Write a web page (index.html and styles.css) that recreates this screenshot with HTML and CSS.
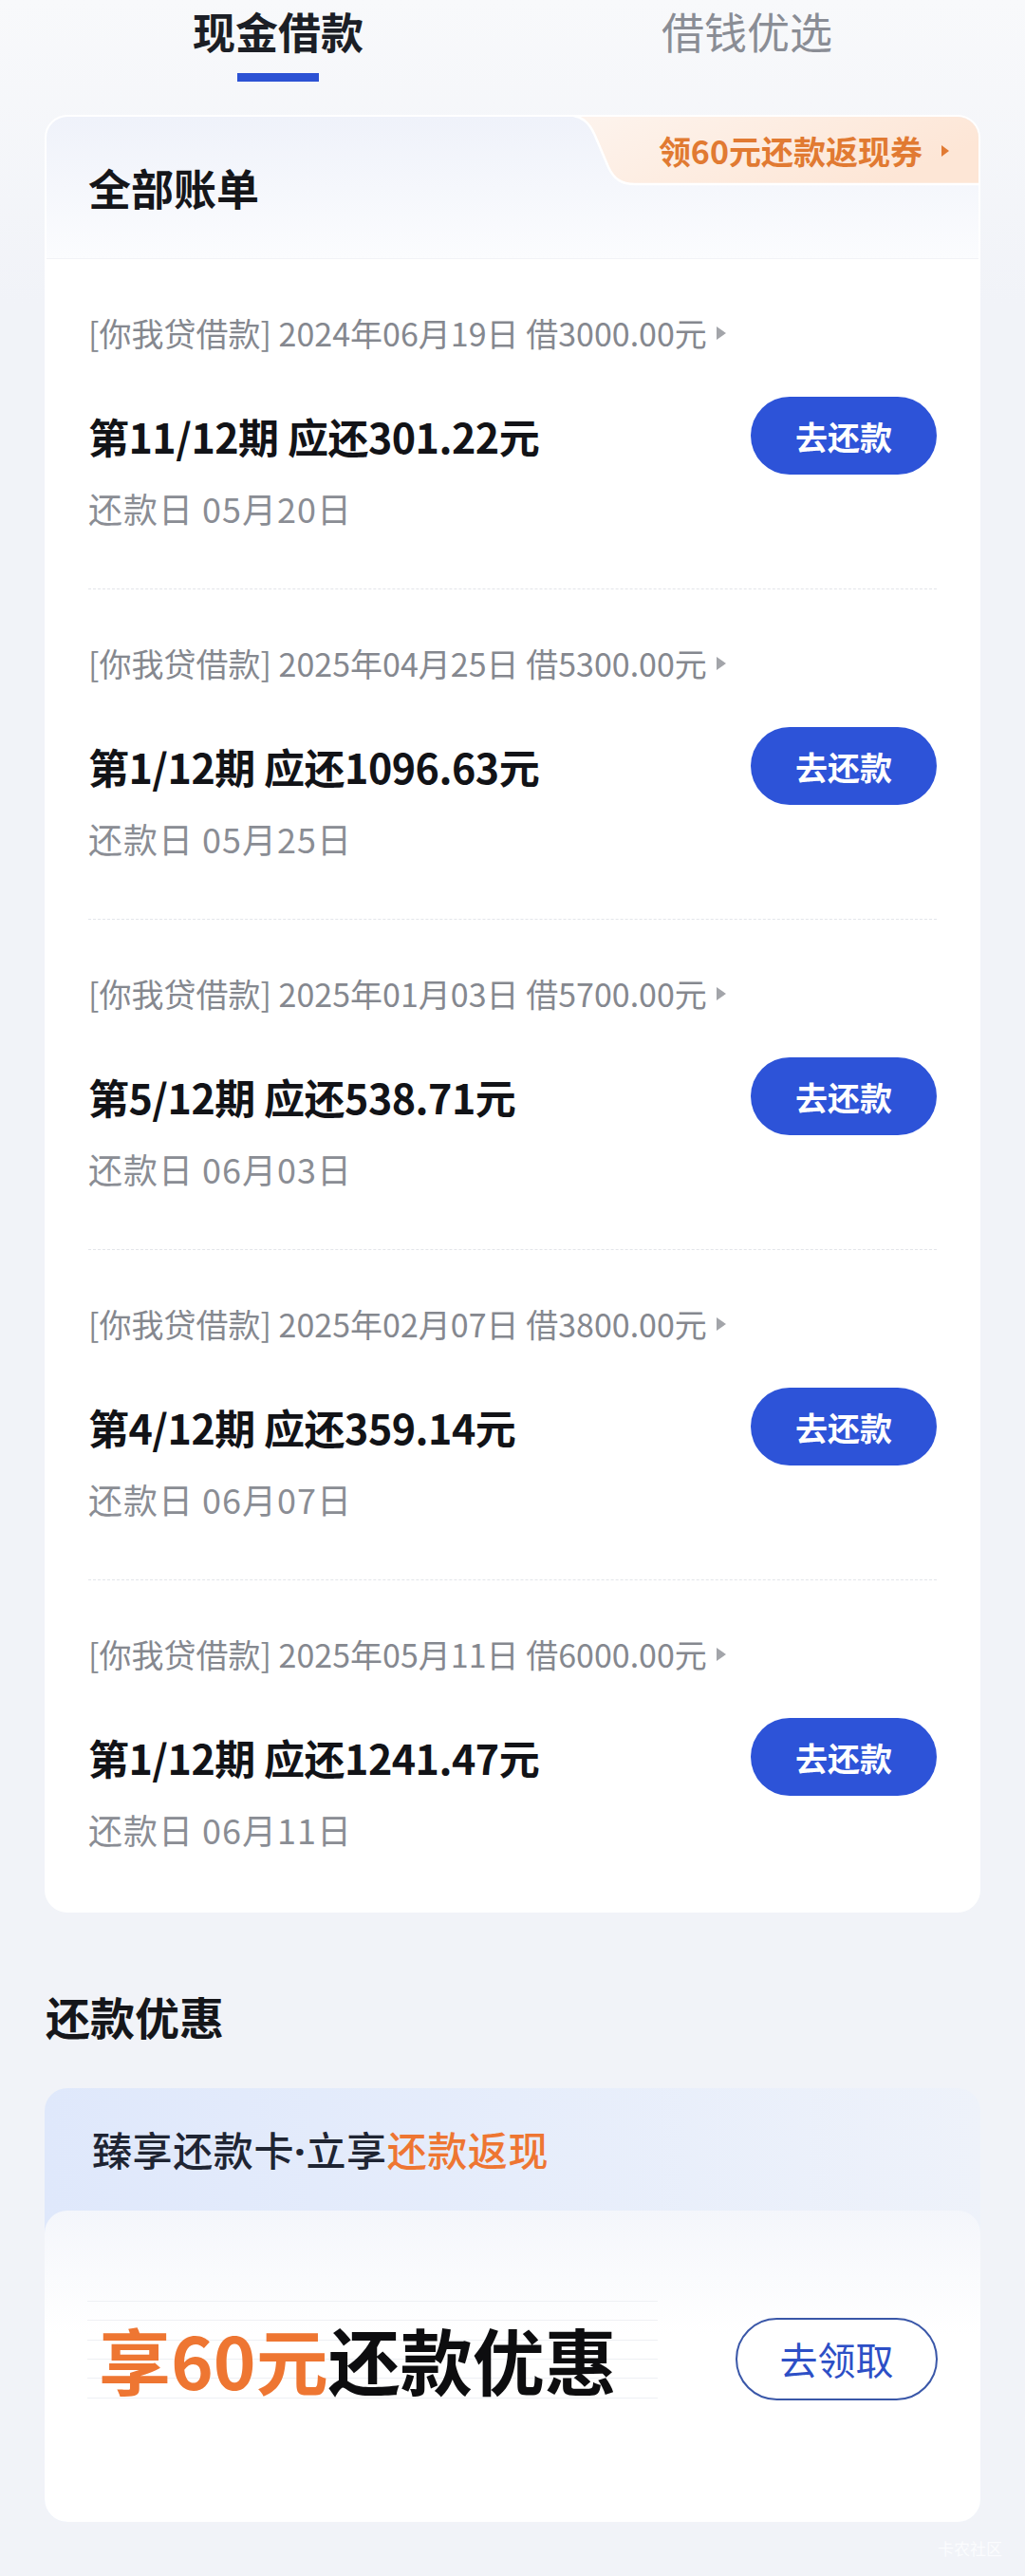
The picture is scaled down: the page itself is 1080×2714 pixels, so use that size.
FILE: index.html
```
<!DOCTYPE html>
<html>
  <head>
    <meta charset="utf-8">
    <title>现金借款</title>
    <link rel="stylesheet" href="styles.css">
  </head>
  <body>
    <div class="tabs">
      <div class="tab active">
        <span class="tab-label">现金借款</span>
        <span class="tab-bar"></span>
      </div>
      <div class="tab">
        <span class="tab-label">借钱优选</span>
      </div>
    </div>

    <div class="card">
      <div class="card-head">
        <h1>全部账单</h1>
        <a class="coupon-tag" href="#">
          <svg class="coupon-shape" width="436" height="75" viewBox="0 0 436 75" preserveAspectRatio="none">
            <defs>
              <linearGradient id="peach" x1="0" y1="0" x2="1" y2="0.4">
                <stop offset="0" stop-color="#fdf4ee"/>
                <stop offset="1" stop-color="#fde6d6"/>
              </linearGradient>
            </defs>
            <path d="M0 0 C18 0 26 8 32 22 L46 55 C52 68 60 73 74 73 L436 73 L436 0 Z" fill="url(#peach)"/>
            <path d="M0 0 C18 0 26 8 32 22 L46 55 C52 68 60 73 74 73 L436 73" fill="none" stroke="#ffffff" stroke-width="2.5"/>
          </svg>
          <span class="coupon-text">领60元还款返现券</span>
          <span class="coupon-arrow"></span>
        </a>
      </div>

      <div class="bill">
        <div class="bill-meta">[你我贷借款] 2024年06月19日 借3000.00元<span class="meta-arrow"></span></div>
        <div class="bill-row">
          <div class="bill-title">第11/12期 应还301.22元</div>
          <button class="pay-btn">去还款</button>
        </div>
        <div class="bill-date">还款日 05月20日</div>
      </div>

      <div class="bill">
        <div class="bill-meta">[你我贷借款] 2025年04月25日 借5300.00元<span class="meta-arrow"></span></div>
        <div class="bill-row">
          <div class="bill-title">第1/12期 应还1096.63元</div>
          <button class="pay-btn">去还款</button>
        </div>
        <div class="bill-date">还款日 05月25日</div>
      </div>

      <div class="bill">
        <div class="bill-meta">[你我贷借款] 2025年01月03日 借5700.00元<span class="meta-arrow"></span></div>
        <div class="bill-row">
          <div class="bill-title">第5/12期 应还538.71元</div>
          <button class="pay-btn">去还款</button>
        </div>
        <div class="bill-date">还款日 06月03日</div>
      </div>

      <div class="bill">
        <div class="bill-meta">[你我贷借款] 2025年02月07日 借3800.00元<span class="meta-arrow"></span></div>
        <div class="bill-row">
          <div class="bill-title">第4/12期 应还359.14元</div>
          <button class="pay-btn">去还款</button>
        </div>
        <div class="bill-date">还款日 06月07日</div>
      </div>

      <div class="bill">
        <div class="bill-meta">[你我贷借款] 2025年05月11日 借6000.00元<span class="meta-arrow"></span></div>
        <div class="bill-row">
          <div class="bill-title">第1/12期 应还1241.47元</div>
          <button class="pay-btn">去还款</button>
        </div>
        <div class="bill-date">还款日 06月11日</div>
      </div>
    </div>

    <h2 class="section-title">还款优惠</h2>

    <div class="promo">
      <div class="promo-head">臻享还款卡<span class="dot">·</span>立享<span class="hl">还款返现</span></div>
      <div class="promo-body">
        <div class="promo-row">
          <div class="promo-offer"><span class="hl">享60元</span>还款优惠</div>
          <button class="claim-btn">去领取</button>
        </div>
      </div>
    </div>

    <div class="watermark">卡农社区</div>
  </body>
</html>
```

FILE: styles.css
```
body {
  margin: 0;
  padding: 0;
  font-family: "Noto Sans CJK SC", "Noto Sans", sans-serif;
  background-color: #f1f3f8;
  background-image: linear-gradient(#f8f9fb, #f1f3f8 320px);
  background-repeat: no-repeat;
  color: #121317;
}

/* top tabs */
.tabs {
  display: flex;
  padding: 0 46px;
  height: 86px;
}
.tab {
  flex: 1;
  display: flex;
  flex-direction: column;
  align-items: center;
}
.tab-label {
  font-size: 45px;
  line-height: 66px;
  color: #8a8d95;
}
.tab.active .tab-label {
  font-weight: bold;
  color: #1c1f26;
}
.tab-bar {
  display: block;
  width: 86px;
  height: 9px;
  margin-top: 11px;
  background-color: #2c52d4;
}

/* bills card */
.card {
  position: relative;
  margin: 35px 47px 0;
  background-color: #fff;
  border: 2px solid #fff;
  border-radius: 24px;
  overflow: hidden;
}
.card-head {
  position: relative;
  height: 150px;
  box-sizing: border-box;
  padding: 45px 44px 0;
  background: linear-gradient(#eff2fa, #fbfcfe);
  border-bottom: 1px solid #f1f2f6;
}
.card-head h1 {
  margin: 0;
  font-size: 45px;
  line-height: 60px;
  font-weight: bold;
  color: #15161a;
}
.coupon-tag {
  position: absolute;
  top: -2px;
  right: 0;
  width: 436px;
  height: 75px;
  display: flex;
  align-items: center;
  justify-content: flex-end;
  padding-right: 31px;
  box-sizing: border-box;
  text-decoration: none;
}
.coupon-shape {
  position: absolute;
  top: 0;
  left: 0;
}
.coupon-text {
  position: relative;
  font-size: 34px;
  font-weight: bold;
  color: #e17a32;
  line-height: 40px;
}
.coupon-arrow {
  position: relative;
  margin-left: 20px;
  width: 0;
  height: 0;
  border-left: 8px solid #e17a32;
  border-top: 6px solid transparent;
  border-bottom: 6px solid transparent;
}

.bill {
  margin: 0 44px;
  padding: 56px 0 63px;
  border-bottom: 1px dashed #e3e5ea;
}
.bill:last-child {
  border-bottom: none;
  padding-bottom: 64px;
}
.bill-meta {
  font-size: 34px;
  line-height: 44px;
  color: #85888f;
  display: flex;
  align-items: center;
}
.meta-arrow {
  display: inline-block;
  margin-left: 10px;
  width: 0;
  height: 0;
  border-left: 10px solid #a3a5aa;
  border-top: 7px solid transparent;
  border-bottom: 7px solid transparent;
}
.bill-row {
  display: flex;
  align-items: center;
  justify-content: space-between;
  margin-top: 45px;
}
.bill-title {
  font-size: 43px;
  font-weight: bold;
  line-height: 56px;
  letter-spacing: -0.5px;
  color: #121317;
}
.pay-btn {
  width: 196px;
  height: 82px;
  border: none;
  border-radius: 41px;
  background-color: #2d53d8;
  color: #fff;
  font-family: inherit;
  font-size: 34px;
  font-weight: bold;
  cursor: pointer;
}
.bill-date {
  margin-top: 13px;
  font-size: 36px;
  line-height: 44px;
  letter-spacing: 1px;
  color: #8a8d94;
}

/* promo section */
.section-title {
  margin: 77px 0 0 48px;
  font-size: 47px;
  line-height: 64px;
  font-weight: bold;
  color: #15161a;
}
.promo {
  margin: 44px 47px 0;
  border-radius: 24px;
  overflow: hidden;
  background: linear-gradient(90deg, #dfe8fb, #e6edfb 50%, #eef2fa);
}
.promo-head {
  height: 129px;
  box-sizing: border-box;
  padding: 35px 50px 0;
  font-size: 42px;
  line-height: 58px;
  font-weight: 500;
  letter-spacing: 0.6px;
  color: #1f2533;
}
.dot {
  font-family: "Noto Sans", sans-serif;
  font-weight: bold;
}
.hl {
  color: #ee7632;
}
.promo-body {
  height: 328px;
  box-sizing: border-box;
  padding: 95px 45px 0;
  border-radius: 24px 24px 0 0;
  background: linear-gradient(#f4f6fb, #fff 130px);
}
.promo-row {
  display: flex;
  align-items: center;
  justify-content: space-between;
}
.promo-offer {
  width: 601px;
  height: 122px;
  box-sizing: border-box;
  padding-left: 12px;
  font-size: 76px;
  line-height: 122px;
  font-weight: bold;
  color: #0d0d0f;
  white-space: nowrap;
  background-image: repeating-linear-gradient(#eef0f4 0, #eef0f4 1px, transparent 1px, transparent 20.33px);
}
.claim-btn {
  width: 213px;
  height: 87px;
  border: 2px solid #3a57a8;
  border-radius: 44px;
  background-color: #fff;
  color: #2d4fc6;
  font-family: inherit;
  font-size: 40px;
  cursor: pointer;
}

.watermark {
  text-align: right;
  padding: 18px 24px 0 0;
  font-size: 17px;
  line-height: 20px;
  color: #fbfcfe;
}
```
